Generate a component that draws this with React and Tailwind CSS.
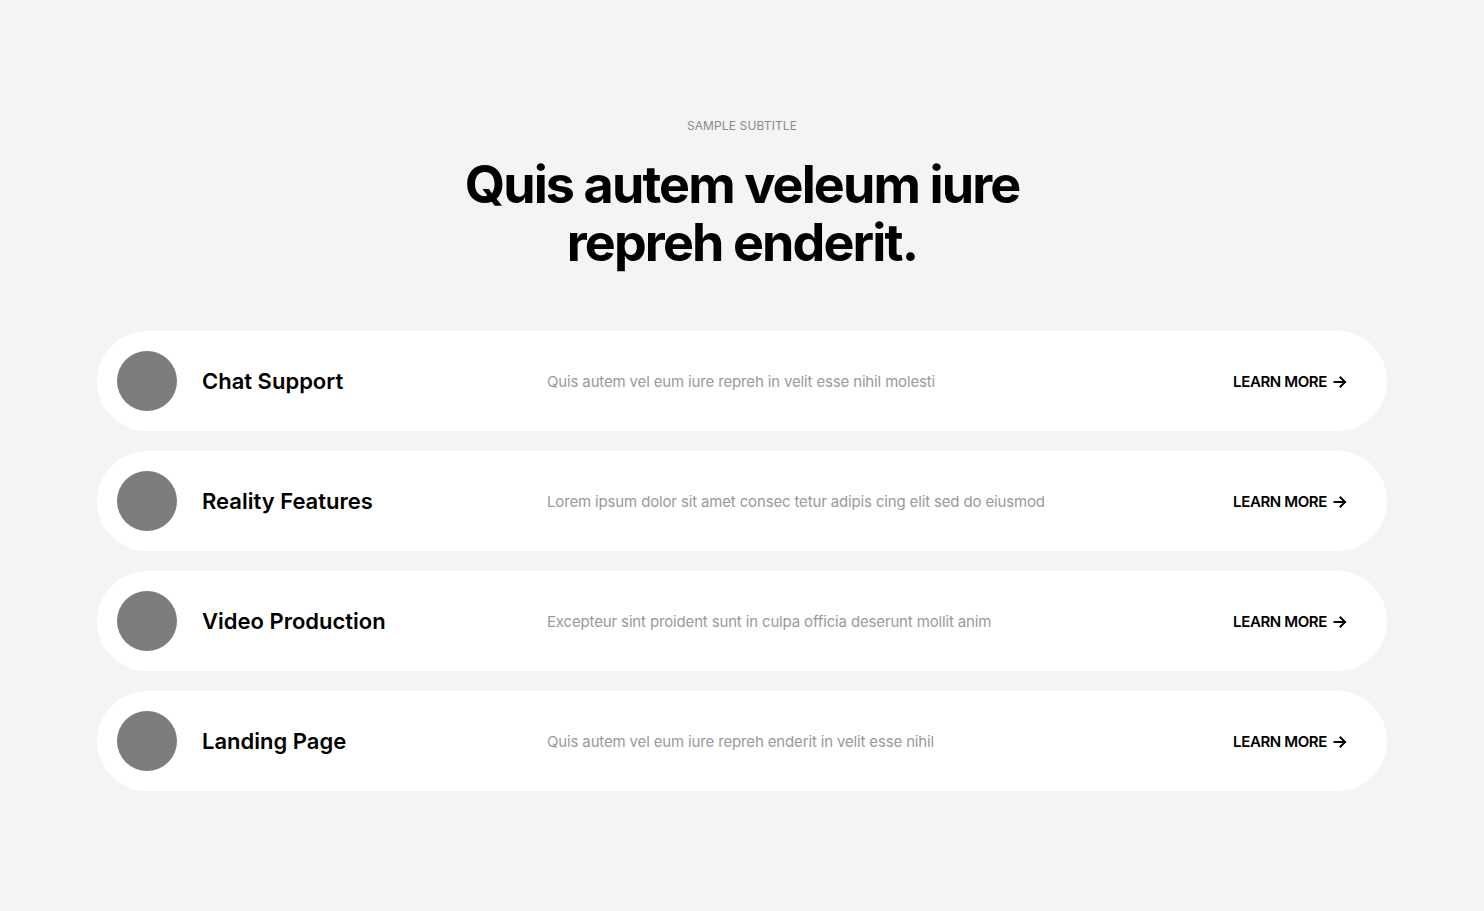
import React from "react";

const items = [
  { title: "Chat Support", desc: "Quis autem vel eum iure repreh in velit esse nihil molesti" },
  { title: "Reality Features", desc: "Lorem ipsum dolor sit amet consec tetur adipis cing elit sed do eiusmod" },
  { title: "Video Production", desc: "Excepteur sint proident sunt in culpa officia deserunt mollit anim" },
  { title: "Landing Page", desc: "Quis autem vel eum iure repreh enderit in velit esse nihil" },
];

function Arrow() {
  return (
    <svg width="14" height="14" viewBox="0 0 14 14" fill="none" stroke="currentColor" strokeWidth="2" strokeLinecap="square">
      <path d="M1.5 7h10.5" />
      <path d="M7.5 2.5L12 7l-4.5 4.5" />
    </svg>
  );
}

export default function App() {
  return (
    <div className="min-h-[911px] bg-[#f4f4f4] pt-[118px] pb-[120px]" style={{ fontFamily: "Inter, 'Noto Sans', sans-serif" }}>
      <div className="text-center text-[12px] leading-[16px] text-[#8a8a8a] tracking-[0.01em]">SAMPLE SUBTITLE</div>
      <h1 className="mt-[22px] text-center text-[52px] leading-[58px] font-bold text-black tracking-[-0.036em]">
        Quis autem veleum iure
        <br />
        repreh enderit.
      </h1>
      <div className="mx-auto mt-[59px] flex w-[1290px] flex-col gap-[20px]">
        {items.map((it) => (
          <div key={it.title} className="flex h-[100px] items-center rounded-full bg-white pl-[20px] pr-[40px]">
            <div className="h-[60px] w-[60px] shrink-0 rounded-full bg-[#7c7c7d]" />
            <div className="ml-[25px] w-[345px] shrink-0 pt-[1px] text-[22px] font-semibold text-black">{it.title}</div>
            <div className="flex-1 pt-[2px] text-[15px] text-[#9a9a9a] tracking-[-0.01em]">{it.desc}</div>
            <div className="flex items-center gap-[6px] pt-[2px] text-[15px] font-semibold text-black tracking-[-0.025em]">
              LEARN MORE
              <Arrow />
            </div>
          </div>
        ))}
      </div>
    </div>
  );
}
